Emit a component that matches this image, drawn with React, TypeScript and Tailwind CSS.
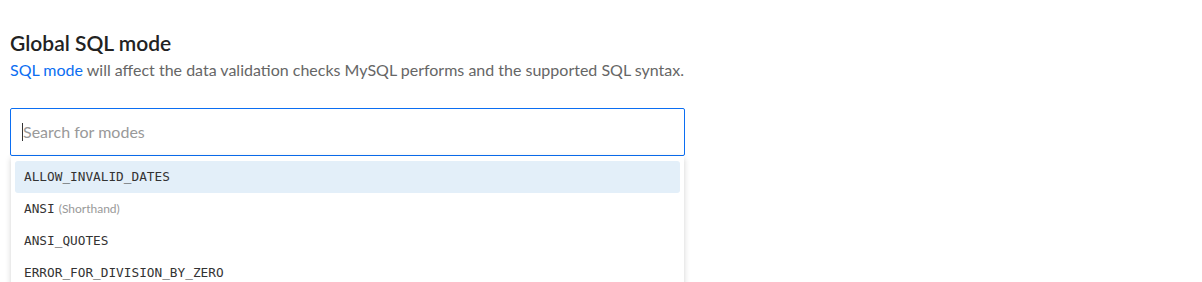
import React from "react";

const modes = [
  { name: "ALLOW_INVALID_DATES", note: "" },
  { name: "ANSI", note: "(Shorthand)" },
  { name: "ANSI_QUOTES", note: "" },
  { name: "ERROR_FOR_DIVISION_BY_ZERO", note: "" },
];

export default function App() {
  return (
    <div className="h-[282px] w-[1202px] overflow-hidden bg-white px-[10px] pt-[31px] font-['Lato',sans-serif]">
      {/* Heading */}
      <h2 className="text-[21px] leading-[24px] font-semibold text-[#222]">Global SQL mode</h2>
      <p className="mt-[5px] text-[16px] leading-[20px] text-[#666]">
        <a className="text-[#0b6ef2]">SQL mode</a> will affect the data validation checks MySQL performs and the
        supported SQL syntax.
      </p>

      {/* Search + dropdown */}
      <div className="mt-[28px] w-[675px]">
        <div className="flex h-[48px] items-center rounded-[2px] border border-[#0b6ef2] px-[11px]">
          <span className="h-[18px] w-px bg-[#333]" />
          <span className="text-[16px] text-[#999]">Search for modes</span>
        </div>
        <div className="mx-px flex flex-col bg-white px-[4px] pt-[5px] shadow-[0_2px_6px_rgba(0,0,0,0.18)]">
          {modes.map((m, i) => (
            <div
              key={m.name}
              className={`flex h-[32px] shrink-0 items-center gap-[4px] rounded-[3px] px-[9px] ${i === 0 ? "bg-[#e3eff9]" : ""}`}
            >
              <span className="font-['DejaVu_Sans_Mono',monospace] text-[12.75px] text-[#333]">{m.name}</span>
              {m.note && <span className="text-[12px] text-[#999]">{m.note}</span>}
            </div>
          ))}
        </div>
      </div>
    </div>
  );
}
